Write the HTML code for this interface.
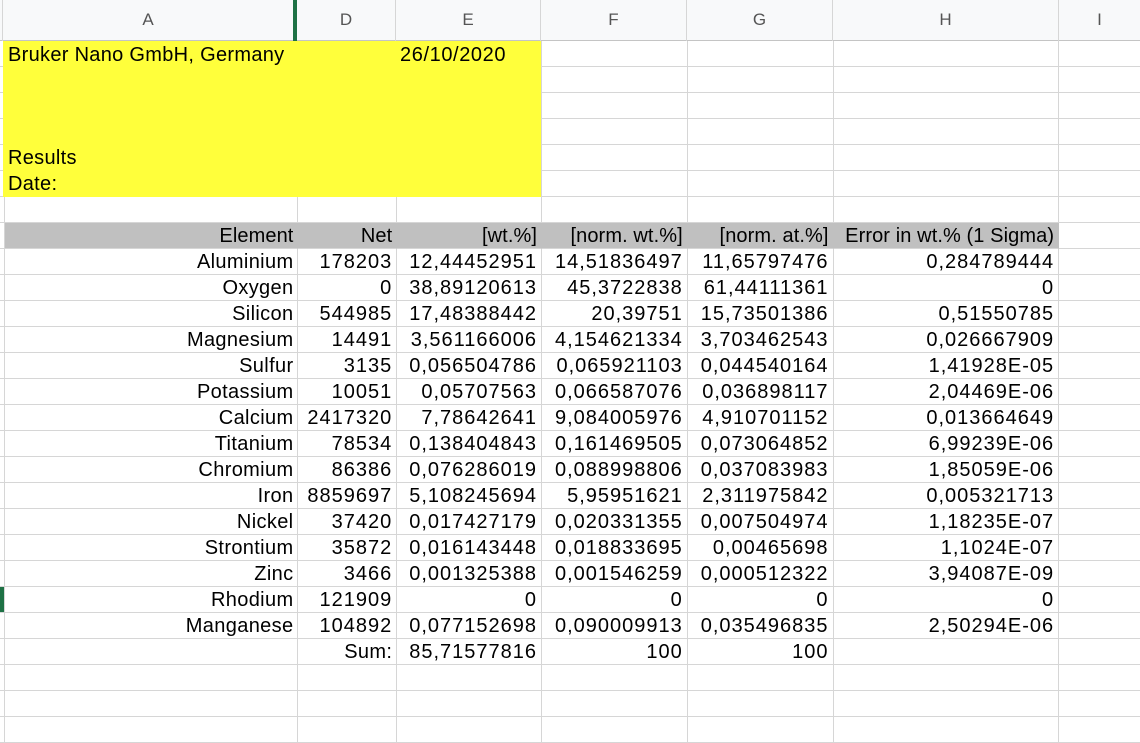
<!DOCTYPE html>
<html><head><meta charset="utf-8"><style>
*{box-sizing:border-box;margin:0;padding:0}
body{width:1140px;height:742px;overflow:hidden;background:#fff;font-family:"Liberation Sans",Arial,sans-serif;font-size:20px;color:#000;position:relative}
.row{position:absolute;left:0;height:26px;display:flex;width:1140px}
.c{height:26px;border-right:1px solid #d6d6d6;border-bottom:1px solid #d6d6d6;text-align:right;padding-right:4px;line-height:27px;white-space:nowrap;overflow:visible;letter-spacing:1px}
.w0{width:3px}.w1{width:294px;letter-spacing:0.35px}.w2{width:99px}.w3{width:145px}.w4{width:146px}.w5{width:146px}.w6{width:226px}.w7{width:81px;border-right:none}
.hdr{position:absolute;top:0;left:0;height:41px;width:1140px;display:flex;background:#f8f9fa;border-bottom:1px solid #c4c4c4}
.hdr div{height:41px;border-right:1px solid #d6d6d6;text-align:center;line-height:40px;color:#555;font-size:17px}
.yellow{position:absolute;left:3px;top:41px;width:538px;height:156px;background:#ffff3b;letter-spacing:0.3px}
.gray{background:#c0c0c0;border-right-color:#c0c0c0;letter-spacing:0.1px}
</style></head><body>
<div class="hdr"><div style="width:3px"></div><div style="width:294px;border-right:4px solid #1e7145">A</div><div style="width:99px">D</div><div style="width:145px">E</div><div style="width:146px">F</div><div style="width:146px">G</div><div style="width:226px">H</div><div style="width:81px;border:none">I</div></div>

<div class="row" style="top:41px"><div class="c w0"></div><div class="c w1"></div><div class="c w2"></div><div class="c w3"></div><div class="c w4"></div><div class="c w5"></div><div class="c w6"></div><div class="c w7"></div></div>
<div class="row" style="top:67px"><div class="c w0"></div><div class="c w1"></div><div class="c w2"></div><div class="c w3"></div><div class="c w4"></div><div class="c w5"></div><div class="c w6"></div><div class="c w7"></div></div>
<div class="row" style="top:93px"><div class="c w0"></div><div class="c w1"></div><div class="c w2"></div><div class="c w3"></div><div class="c w4"></div><div class="c w5"></div><div class="c w6"></div><div class="c w7"></div></div>
<div class="row" style="top:119px"><div class="c w0"></div><div class="c w1"></div><div class="c w2"></div><div class="c w3"></div><div class="c w4"></div><div class="c w5"></div><div class="c w6"></div><div class="c w7"></div></div>
<div class="row" style="top:145px"><div class="c w0"></div><div class="c w1"></div><div class="c w2"></div><div class="c w3"></div><div class="c w4"></div><div class="c w5"></div><div class="c w6"></div><div class="c w7"></div></div>
<div class="row" style="top:171px"><div class="c w0"></div><div class="c w1"></div><div class="c w2"></div><div class="c w3"></div><div class="c w4"></div><div class="c w5"></div><div class="c w6"></div><div class="c w7"></div></div>
<div class="yellow">
<div style="position:absolute;left:5px;top:3px">Bruker Nano GmbH, Germany</div>
<div style="position:absolute;left:397px;top:3px;letter-spacing:0.6px">26/10/2020</div>
<div style="position:absolute;left:5px;top:106px">Results</div>
<div style="position:absolute;left:5px;top:132px">Date:</div>
</div>
<div class="row" style="top:197px"><div class="c w0"></div><div class="c w1"></div><div class="c w2"></div><div class="c w3"></div><div class="c w4"></div><div class="c w5"></div><div class="c w6"></div><div class="c w7"></div></div>
<div class="row" style="top:223px"><div class="c w0"></div><div class="c w1 gray">Element</div><div class="c w2 gray">Net</div><div class="c w3 gray">[wt.%]</div><div class="c w4 gray">[norm. wt.%]</div><div class="c w5 gray">[norm. at.%]</div><div class="c w6 gray">Error in wt.% (1 Sigma)</div><div class="c w7"></div></div>
<div class="row" style="top:249px"><div class="c w0"></div><div class="c w1">Aluminium</div><div class="c w2">178203</div><div class="c w3">12,44452951</div><div class="c w4">14,51836497</div><div class="c w5">11,65797476</div><div class="c w6">0,284789444</div><div class="c w7"></div></div>
<div class="row" style="top:275px"><div class="c w0"></div><div class="c w1">Oxygen</div><div class="c w2">0</div><div class="c w3">38,89120613</div><div class="c w4">45,3722838</div><div class="c w5">61,44111361</div><div class="c w6">0</div><div class="c w7"></div></div>
<div class="row" style="top:301px"><div class="c w0"></div><div class="c w1">Silicon</div><div class="c w2">544985</div><div class="c w3">17,48388442</div><div class="c w4">20,39751</div><div class="c w5">15,73501386</div><div class="c w6">0,51550785</div><div class="c w7"></div></div>
<div class="row" style="top:327px"><div class="c w0"></div><div class="c w1">Magnesium</div><div class="c w2">14491</div><div class="c w3">3,561166006</div><div class="c w4">4,154621334</div><div class="c w5">3,703462543</div><div class="c w6">0,026667909</div><div class="c w7"></div></div>
<div class="row" style="top:353px"><div class="c w0"></div><div class="c w1">Sulfur</div><div class="c w2">3135</div><div class="c w3">0,056504786</div><div class="c w4">0,065921103</div><div class="c w5">0,044540164</div><div class="c w6">1,41928E-05</div><div class="c w7"></div></div>
<div class="row" style="top:379px"><div class="c w0"></div><div class="c w1">Potassium</div><div class="c w2">10051</div><div class="c w3">0,05707563</div><div class="c w4">0,066587076</div><div class="c w5">0,036898117</div><div class="c w6">2,04469E-06</div><div class="c w7"></div></div>
<div class="row" style="top:405px"><div class="c w0"></div><div class="c w1">Calcium</div><div class="c w2">2417320</div><div class="c w3">7,78642641</div><div class="c w4">9,084005976</div><div class="c w5">4,910701152</div><div class="c w6">0,013664649</div><div class="c w7"></div></div>
<div class="row" style="top:431px"><div class="c w0"></div><div class="c w1">Titanium</div><div class="c w2">78534</div><div class="c w3">0,138404843</div><div class="c w4">0,161469505</div><div class="c w5">0,073064852</div><div class="c w6">6,99239E-06</div><div class="c w7"></div></div>
<div class="row" style="top:457px"><div class="c w0"></div><div class="c w1">Chromium</div><div class="c w2">86386</div><div class="c w3">0,076286019</div><div class="c w4">0,088998806</div><div class="c w5">0,037083983</div><div class="c w6">1,85059E-06</div><div class="c w7"></div></div>
<div class="row" style="top:483px"><div class="c w0"></div><div class="c w1">Iron</div><div class="c w2">8859697</div><div class="c w3">5,108245694</div><div class="c w4">5,95951621</div><div class="c w5">2,311975842</div><div class="c w6">0,005321713</div><div class="c w7"></div></div>
<div class="row" style="top:509px"><div class="c w0"></div><div class="c w1">Nickel</div><div class="c w2">37420</div><div class="c w3">0,017427179</div><div class="c w4">0,020331355</div><div class="c w5">0,007504974</div><div class="c w6">1,18235E-07</div><div class="c w7"></div></div>
<div class="row" style="top:535px"><div class="c w0"></div><div class="c w1">Strontium</div><div class="c w2">35872</div><div class="c w3">0,016143448</div><div class="c w4">0,018833695</div><div class="c w5">0,00465698</div><div class="c w6">1,1024E-07</div><div class="c w7"></div></div>
<div class="row" style="top:561px"><div class="c w0"></div><div class="c w1">Zinc</div><div class="c w2">3466</div><div class="c w3">0,001325388</div><div class="c w4">0,001546259</div><div class="c w5">0,000512322</div><div class="c w6">3,94087E-09</div><div class="c w7"></div></div>
<div class="row" style="top:587px"><div class="c w0" style="background:#1e7145"></div><div class="c w1">Rhodium</div><div class="c w2">121909</div><div class="c w3">0</div><div class="c w4">0</div><div class="c w5">0</div><div class="c w6">0</div><div class="c w7"></div></div>
<div class="row" style="top:613px"><div class="c w0"></div><div class="c w1">Manganese</div><div class="c w2">104892</div><div class="c w3">0,077152698</div><div class="c w4">0,090009913</div><div class="c w5">0,035496835</div><div class="c w6">2,50294E-06</div><div class="c w7"></div></div>
<div class="row" style="top:639px"><div class="c w0"></div><div class="c w1"></div><div class="c w2" style="letter-spacing:0.35px">Sum:</div><div class="c w3">85,71577816</div><div class="c w4">100</div><div class="c w5">100</div><div class="c w6"></div><div class="c w7"></div></div>
<div class="row" style="top:665px"><div class="c w0"></div><div class="c w1"></div><div class="c w2"></div><div class="c w3"></div><div class="c w4"></div><div class="c w5"></div><div class="c w6"></div><div class="c w7"></div></div>
<div class="row" style="top:691px"><div class="c w0"></div><div class="c w1"></div><div class="c w2"></div><div class="c w3"></div><div class="c w4"></div><div class="c w5"></div><div class="c w6"></div><div class="c w7"></div></div>
<div class="row" style="top:717px"><div class="c w0"></div><div class="c w1"></div><div class="c w2"></div><div class="c w3"></div><div class="c w4"></div><div class="c w5"></div><div class="c w6"></div><div class="c w7"></div></div>
</body></html>
